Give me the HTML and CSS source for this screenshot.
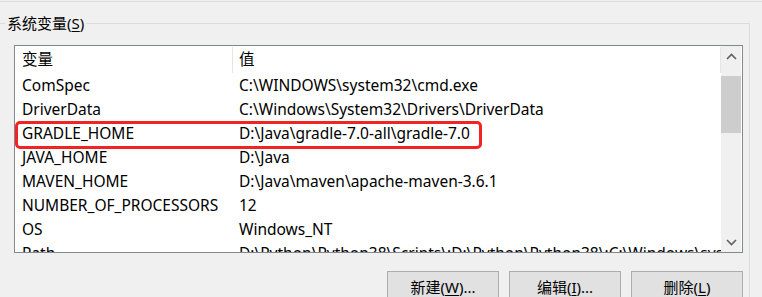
FILE: index.html
```html
<!DOCTYPE html>
<html lang="zh-CN">
<head>
  <meta charset="UTF-8">
  <title>系统变量</title>
  <link rel="stylesheet" href="styles.css">
</head>
<body>
<div class="prev-line"></div>
<fieldset class="group">
  <legend>系统变量(<u>S</u>)</legend>
  <!-- 变量列表 -->
  <div class="list">
    <div class="list-body">
      <div class="row head">
        <span class="name">变量</span><span class="value">值</span>
      </div>
      <div class="row"><span class="name">ComSpec</span><span class="value">C:\WINDOWS\system32\cmd.exe</span></div>
      <div class="row"><span class="name">DriverData</span><span class="value">C:\Windows\System32\Drivers\DriverData</span></div>
      <div class="row"><span class="name">GRADLE_HOME</span><span class="value">D:\Java\gradle-7.0-all\gradle-7.0</span></div>
      <div class="row"><span class="name">JAVA_HOME</span><span class="value">D:\Java</span></div>
      <div class="row"><span class="name">MAVEN_HOME</span><span class="value">D:\Java\maven\apache-maven-3.6.1</span></div>
      <div class="row"><span class="name">NUMBER_OF_PROCESSORS</span><span class="value">12</span></div>
      <div class="row"><span class="name">OS</span><span class="value">Windows_NT</span></div>
      <div class="row"><span class="name">Path</span><span class="value">D:\Python\Python38\Scripts\;D:\Python\Python38\;C:\Windows\system32</span></div>
      <!-- 红色标注框 -->
      <div class="mark"></div>
    </div>
    <div class="scrollbar">
      <span class="arrow">
        <svg width="11" height="7" viewBox="0 0 11 7"><path d="M1 6 L5.5 1.5 L10 6" fill="none" stroke="#606060" stroke-width="1.6"/></svg>
      </span>
      <div class="track"><div class="thumb"></div></div>
      <span class="arrow">
        <svg width="11" height="7" viewBox="0 0 11 7"><path d="M1 1 L5.5 5.5 L10 1" fill="none" stroke="#606060" stroke-width="1.6"/></svg>
      </span>
    </div>
  </div>
  <div class="buttons">
    <button>新建(<u>W</u>)...</button>
    <button>编辑(<u>I</u>)...</button>
    <button>删除(<u>L</u>)</button>
  </div>
</fieldset>
</body>
</html>
```

FILE: styles.css
```css
* {
  box-sizing: border-box;
}

body {
  margin: 0;
  background: #f0f0f0;
  font-family: "Noto Sans", "Noto Sans CJK SC", sans-serif;
  font-size: 15px;
  color: #000;
  overflow: hidden;
}

.prev-line {
  margin-top: 1px;
  border-top: 1px solid #dcdcdc;
}

.group {
  width: 750px;
  margin: 11px 0 0 0;
  padding: 0 0 0 14px;
  border: 1px solid #dcdcdc;
  border-left: 0;
  border-bottom: 0;
}

.group legend {
  margin-left: -9px;
  padding: 0 2px;
  line-height: 20px;
}

.group legend u,
.buttons u {
  text-decoration-thickness: 1px;
  text-underline-offset: 2px;
}

.list {
  position: relative;
  display: flex;
  width: 729px;
  height: 208px;
  margin-top: 12px;
  padding-right: 1px;
  background: #fff;
  border: 1px solid #828790;
}

.list-body {
  position: relative;
  flex: 1;
  overflow: hidden;
  font-size: 15.5px;
}

.row {
  display: flex;
  height: 24px;
  line-height: 24px;
  white-space: nowrap;
}

.row.head {
  height: 27px;
  line-height: 27px;
}

.row .name {
  width: 218px;
  flex-shrink: 0;
  padding-left: 7px;
}

.row .value {
  flex: 1;
  padding-left: 6px;
  overflow: hidden;
}

.row.head .name,
.row.head .value {
  border-right: 1px solid #e5e5e5;
  margin: 1px 0 0;
  line-height: 25px;
}

.mark {
  position: absolute;
  left: 0;
  top: 75px;
  width: 467px;
  height: 28px;
  border: 3px solid #f22323;
  border-radius: 5px;
}

.scrollbar {
  display: flex;
  flex-direction: column;
  width: 20px;
  background: #f0f0f0;
}

.scrollbar .arrow {
  display: flex;
  height: 20px;
  align-items: center;
  justify-content: center;
}

.scrollbar .track {
  flex: 1;
  padding-top: 10px;
}

.scrollbar .thumb {
  height: 57px;
  background: #cdcdcd;
}

.buttons {
  display: flex;
  justify-content: flex-end;
  gap: 10px;
  width: 729px;
  margin-top: 18px;
}

.buttons button {
  width: 112px;
  height: 30px;
  padding: 0;
  font: inherit;
  color: #000;
  background: #e1e1e1;
  border: 1px solid #adadad;
}
```
